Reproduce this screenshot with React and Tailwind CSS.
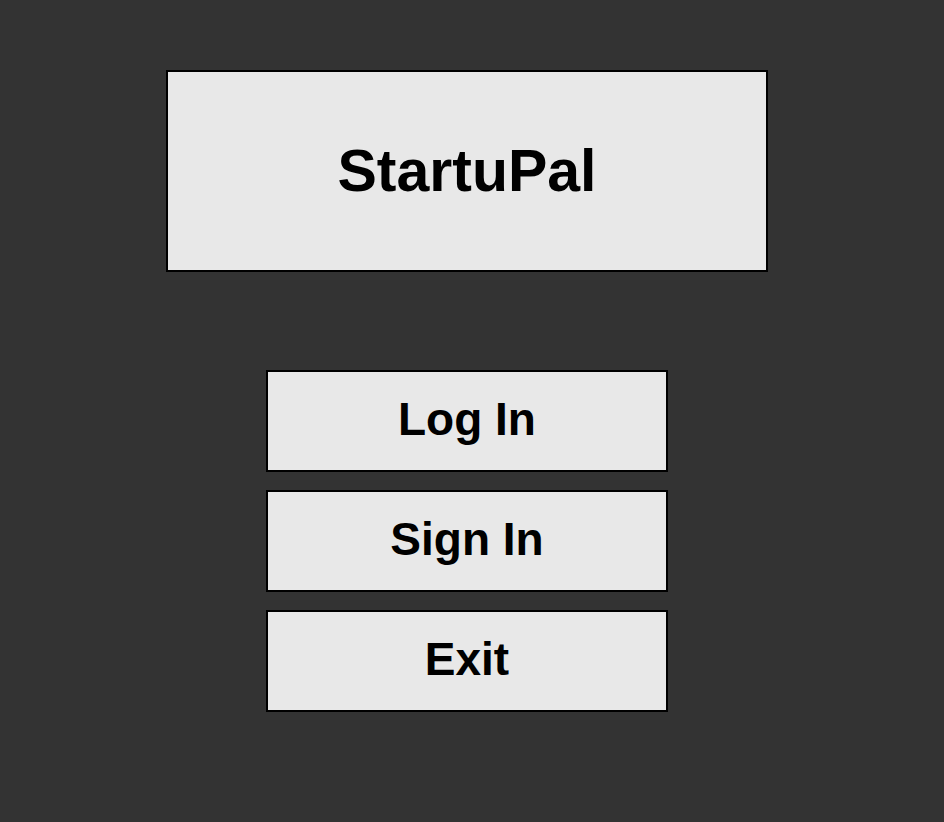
import React from 'react';

const MenuButton = ({ label }) => (
  <button
    type="button"
    className="w-[402px] h-[102px] border-2 border-black bg-[#e8e8e8] text-black text-[46px] font-bold leading-none flex items-center justify-center pb-[4px]"
  >
    {label}
  </button>
);

export default function App() {
  return (
    <div
      className="min-h-[822px] w-full bg-[#333333] flex flex-col items-center pt-[70px] pr-[10px]"
      style={{ fontFamily: '"Liberation Sans", Arial, sans-serif' }}
    >
      {/* Title */}
      <div className="w-[602px] h-[202px] border-2 border-black bg-[#e8e8e8] flex items-center justify-center">
        <h1 className="text-[59px] font-bold text-black leading-none">StartuPal</h1>
      </div>

      {/* Menu */}
      <div className="mt-[98px] flex flex-col gap-[18px]">
        <MenuButton label="Log In" />
        <MenuButton label="Sign In" />
        <MenuButton label="Exit" />
      </div>
    </div>
  );
}
